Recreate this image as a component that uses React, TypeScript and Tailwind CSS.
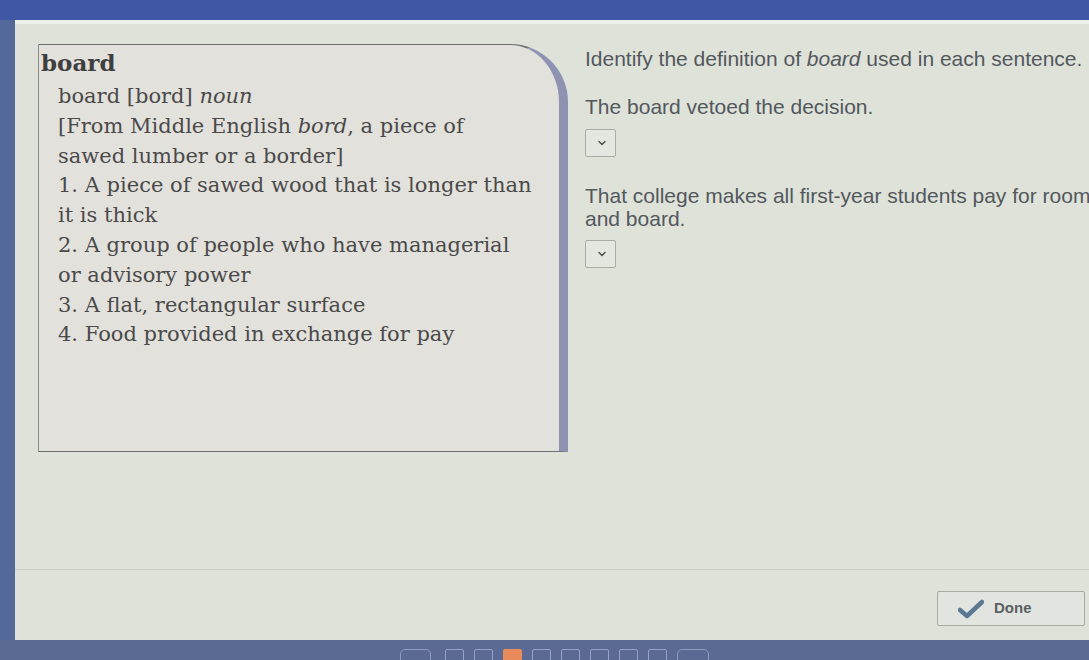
import { ChevronDown } from 'lucide-react';

const lines: React.ReactNode[] = [
  <>
    board [bord] <span className="italic">noun</span>
  </>,
  <>
    [From Middle English <span className="italic">bord</span>, a piece of
  </>,
  'sawed lumber or a border]',
  '1. A piece of sawed wood that is longer than',
  'it is thick',
  '2. A group of people who have managerial',
  'or advisory power',
  '3. A flat, rectangular surface',
  '4. Food provided in exchange for pay',
];

function Dropdown() {
  return (
    <div className="flex h-[28px] w-[31px] items-center justify-end rounded-[2px] border border-[#a9aca6] bg-[#e4e7e0] pr-[7px]">
      <ChevronDown className="h-[12px] w-[12px] text-[#4d5257]" strokeWidth={3} />
    </div>
  );
}

export default function App() {
  const pages = [0, 1, 2, 3, 4, 5, 6, 7];
  return (
    <div className="flex h-[660px] w-[1089px] flex-col overflow-hidden bg-[#4a5d99]" style={{ fontFamily: '"Liberation Sans", Arial, sans-serif' }}>
      {/* top bar */}
      <div className="h-[20px] shrink-0 bg-[#3f57a4]" />

      <div className="flex min-h-0 flex-1">
        <div className="w-[15px] shrink-0 bg-[#55689a]" />

        {/* content panel */}
        <div className="flex min-w-0 flex-1 flex-col overflow-hidden border-t-[4px] border-[#eef0ea] bg-[#dee2d9]">
          <div className="flex h-[546px] shrink-0 border-b border-[#c9cec4] pl-[23px] pt-[20px]">
            {/* definition card */}
            <div
              className="h-[408px] w-[530px] shrink-0 rounded-tr-[58px] border-t border-r-[9px] border-b border-l border-t-[#6f6f6f] border-r-[#8e93b2] border-b-[#6d6f72] border-l-[#8a8a8a] bg-[#e3e1dc] text-[#4a4a4a]"
              style={{ fontFamily: '"DejaVu Serif", "Liberation Serif", serif' }}
            >
              <div className="pl-[2px] pt-[3px] text-[23px] font-bold leading-[30px] text-[#3f3f3f]">board</div>
              <div className="mt-[4px] whitespace-nowrap pl-[19px] text-[21px] leading-[29.8px]">
                {lines.map((l, i) => (
                  <div key={i}>{l}</div>
                ))}
              </div>
            </div>

            {/* questions */}
            <div className="ml-[17px] flex min-w-0 flex-1 flex-col whitespace-nowrap text-[21px] text-[#53585d]">
              <div className="mt-[3px] leading-[24px]">
                Identify the definition of <span className="italic">board</span> used in each sentence.
              </div>
              <div className="mt-[25px] leading-[22px]">The board vetoed the decision.</div>
              <div className="mt-[11px]">
                <Dropdown />
              </div>
              <div className="mt-[27px] leading-[23px]">
                That college makes all first-year students pay for room
                <br />
                and board.
              </div>
              <div className="mt-[10px]">
                <Dropdown />
              </div>
            </div>
          </div>

          <div className="flex justify-end pr-[4px] pt-[21px]">
            <button className="flex h-[35px] w-[148px] items-center gap-[10px] rounded-[2px] border border-[#a6aaa4] bg-[#e2e5df] pl-[20px] text-[15px] font-semibold text-[#5b5f63]">
              <svg width="26" height="20" viewBox="0 0 26 20">
                <path d="M2 11 L9 17 L24 3" fill="none" stroke="#5b7894" strokeWidth="4.5" strokeLinecap="round" strokeLinejoin="round" />
              </svg>
              Done
            </button>
          </div>
        </div>
      </div>

      {/* bottom bar */}
      <div className="flex h-[20px] shrink-0 items-start bg-[#5a6a95] pl-[400px] pt-[9px]">
        <div className="h-[16px] w-[31px] rounded-[5px] border border-[#8e9cc2]" />
        <div className="ml-[14px] flex gap-[10px]">
          {pages.map((p) => (
            <div
              key={p}
              className={
                p === 2
                  ? 'h-[14px] w-[19px] rounded-[2px] bg-[#e98a5a]'
                  : 'h-[14px] w-[19px] rounded-[2px] border border-[#97a3c6]'
              }
            />
          ))}
        </div>
        <div className="ml-[10px] h-[16px] w-[32px] rounded-[5px] border border-[#8e9cc2]" />
      </div>
    </div>
  );
}
